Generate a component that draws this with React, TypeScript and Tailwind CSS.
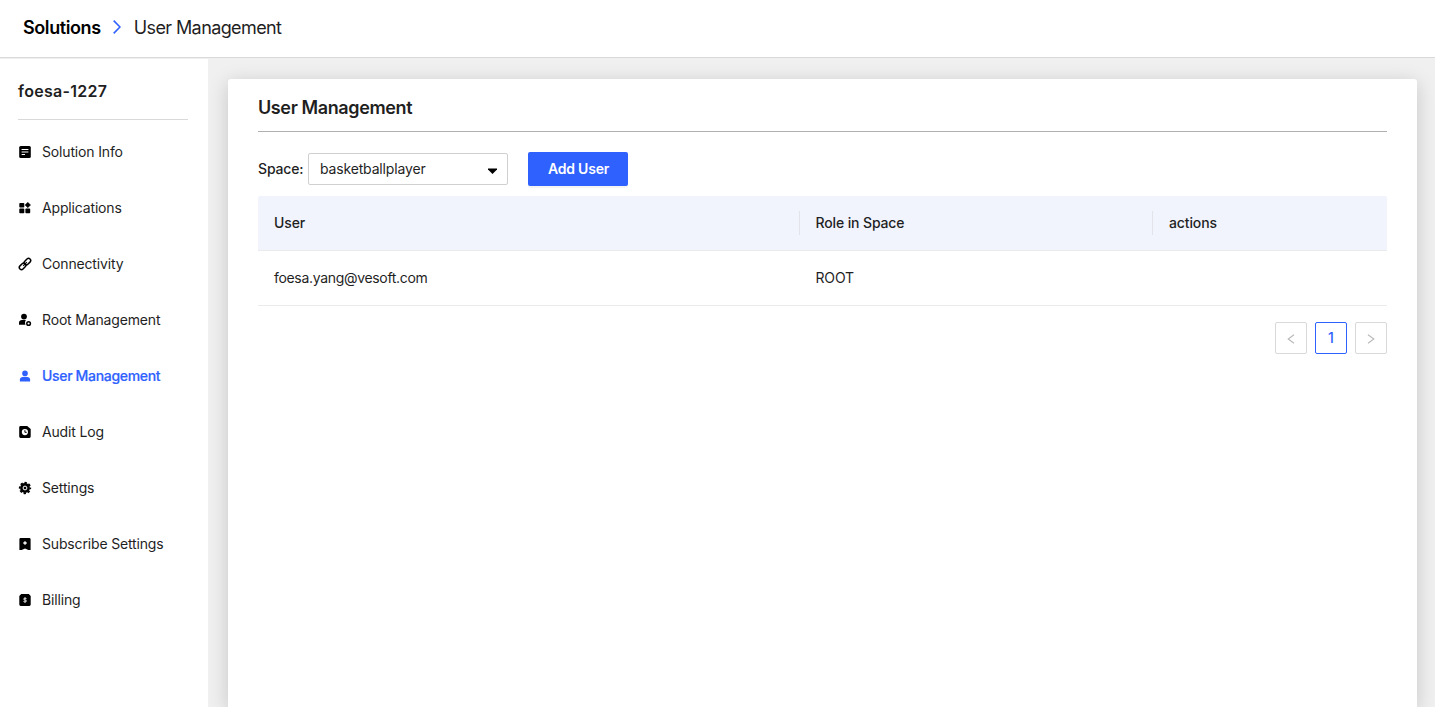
import React from "react";

type IconProps = { children: React.ReactNode };

const Glyph = ({ children }: IconProps) => (
  <svg width="14" height="14" viewBox="0 0 14 14" fill="currentColor" className="shrink-0">
    {children}
  </svg>
);

const InfoIcon = () => (
  <Glyph>
    <rect x="1.2" y="1" width="11.6" height="12" rx="1.5" />
    <path d="M3.6 4.5h6.8M3.6 7h6.8M3.6 9.500h3.400" stroke="#fff" strokeWidth="1.100" fill="none" />
  </Glyph>
);

const AppsIcon = () => (
  <Glyph>
    <rect x="1.3" y="1.9" width="5" height="4.7" rx="0.8" />
    <rect x="1.3" y="7.6" width="5" height="4.7" rx="0.8" />
    <rect x="7.4" y="7.6" width="4.8" height="4.7" rx="0.8" />
    <path d="M9.8 1.2l2.8 2.8-2.8 2.8L7 4z" stroke="currentColor" strokeWidth="0.4" strokeLinejoin="round" />
  </Glyph>
);

const LinkIcon = () => (
  <Glyph>
    <g fill="none" stroke="currentColor" strokeWidth="1.5">
      <rect x="5.7" y="2.55" width="7.4" height="4.3" rx="2.15" transform="rotate(-45 9.4 4.7)" />
      <rect x="0.9" y="7.15" width="7.4" height="4.3" rx="2.15" transform="rotate(-45 4.6 9.3)" />
      <path d="M5.2 8.8l3.6-3.6" strokeWidth="1.2" />
    </g>
  </Glyph>
);

const RootIcon = () => (
  <Glyph>
    <circle cx="6" cy="3.6" r="2.9" />
    <path d="M1 11.8V9.8C1 8 2.3 7.100 4 7.100h3.900C6.900 8.400 6.800 10.200 7.500 11.800z" />
    <circle cx="10.600" cy="10.500" r="1.800" fill="none" stroke="currentColor" strokeWidth="1.500" />
  </Glyph>
);

const UserIcon = () => (
  <Glyph>
    <circle cx="7" cy="4.400" r="2.800" />
    <path d="M1.900 12.400v-1.800C1.900 8.800 3.200 7.900 4.700 7.900h4.600c1.500 0 2.800.9 2.800 2.700v1.800z" />
  </Glyph>
);

const AuditIcon = () => (
  <Glyph>
    <path d="M2.600 1h6.600l3.500 3v7.600a1.400 1.400 0 0 1-1.400 1.400H2.600a1.400 1.400 0 0 1-1.400-1.400V2.400A1.400 1.400 0 0 1 2.600 1z" />
    <circle cx="6.900" cy="7.100" r="3.100" fill="#fff" />
    <path d="M6.900 5.200v2.100h1.800" fill="none" stroke="currentColor" strokeWidth="1" />
  </Glyph>
);

const SettingsIcon = () => (
  <Glyph>
    <circle cx="7" cy="7" r="4.900" />
    <circle cx="7" cy="7" r="5.300" fill="none" stroke="currentColor" strokeWidth="1.700" strokeDasharray="2.400 1.763" strokeDashoffset="1.200" />
    <circle cx="7" cy="7" r="1.900" fill="none" stroke="#fff" strokeWidth="1" />
  </Glyph>
);

const SubscribeIcon = () => (
  <Glyph>
    <path d="M2.700 1h8.600a1.300 1.300 0 0 1 1.300 1.300V13H10.300L7 11.400 3.700 13H1.400V2.300A1.300 1.300 0 0 1 2.700 1z" />
    <path d="M7 4.300v3.400M5.300 6h3.400" stroke="#fff" strokeWidth="1.300" />
  </Glyph>
);

const BillingIcon = () => (
  <Glyph>
    <path d="M3.200 1h7.600l1.900 1.900v8.700a1.400 1.400 0 0 1-1.400 1.400H2.700a1.400 1.400 0 0 1-1.400-1.400V2.900z" />
    <path d="M8.600 5.700C8.200 5.100 5.500 4.900 5.500 6.100c0 1.200 3.100.6 3.100 1.900 0 1.200-2.800 1.100-3.200.4M7 4.200v5.600" fill="none" stroke="#fff" strokeWidth="0.800" />
  </Glyph>
);

const menu = [
  { label: "Solution Info", Icon: InfoIcon },
  { label: "Applications", Icon: AppsIcon },
  { label: "Connectivity", Icon: LinkIcon },
  { label: "Root Management", Icon: RootIcon },
  { label: "User Management", Icon: UserIcon, active: true },
  { label: "Audit Log", Icon: AuditIcon },
  { label: "Settings", Icon: SettingsIcon },
  { label: "Subscribe Settings", Icon: SubscribeIcon },
  { label: "Billing", Icon: BillingIcon },
];

const Header = () => (
  <header className="flex h-[58px] shrink-0 items-center border-b border-[#d9d9d9] bg-white pb-0.5 pl-[23px] text-[18px] leading-7">
    <span className="font-semibold tracking-[-0.400px] text-black">Solutions</span>
    <svg width="8" height="14" viewBox="0 0 8 14" className="mr-[13px] mb-[2px] ml-3" fill="none" stroke="#2f61ff" strokeWidth="1.600">
      <path d="M0.700 0.600L7 7l-6.300 6.400" />
    </svg>
    <span className="tracking-[-0.600px]">User Management</span>
  </header>
);

const Sidebar = () => (
  <aside className="mt-px w-[208px] shrink-0 bg-white">
    <h2 className="mx-[18px] mr-5 h-[61px] border-b border-[#d9d9d9] pt-[20px] text-[16px] leading-6 font-semibold tracking-[0.300px]">
      foesa-1227
    </h2>
    <nav className="mt-1 flex flex-col text-[14px]">
      {menu.map(({ label, Icon, active }) => (
        <a
          key={label}
          className={
            active
              ? "flex h-14 items-center gap-[10px] pl-[18px] font-medium tracking-[-0.330px] text-[#2f61ff]"
              : "flex h-14 items-center gap-[10px] pl-[18px] tracking-[-0.160px] text-black"
          }
        >
          <Icon />
          <span className={active ? "mb-0.5 [-webkit-text-stroke:0.200px_#2f61ff]" : "mb-0.5 text-[#1f1f1f]"}>{label}</span>
        </a>
      ))}
    </nav>
  </aside>
);

const PageArrow = ({ d }: { d: string }) => (
  <button className="flex size-8 items-center justify-center rounded-[2px] border border-[#d9d9d9]">
    <svg width="8" height="10" viewBox="0 0 8 10" fill="none" stroke="#b8b8b8" strokeWidth="1.100" className="mt-0.5">
      <path d={d} />
    </svg>
  </button>
);

export default function App() {
  return (
    <div className="flex h-screen flex-col overflow-hidden bg-[#f0f0f0] font-['Inter','Liberation_Sans',sans-serif] text-[14px] text-[#1f1f1f]">
      <Header />
      <div className="flex min-h-0 flex-1">
        <Sidebar />
        <main className="mt-[21px] mr-[18px] ml-5 min-w-0 flex-1 rounded-t-[3px] bg-white px-[30px] shadow-[0_4px_20px_rgba(0,0,0,0.180)]">
          <h1 className="h-[53px] border-b border-[#b0b0b0] pt-[15px] text-[18px] leading-7 font-semibold tracking-[-0.380px]">
            User Management
          </h1>
          <div className="mt-5 flex h-[34px] items-center">
            <span className="mb-0.5 w-[50px] font-medium tracking-[-0.150px]">Space:</span>
            <div className="flex h-8 w-[200px] items-center justify-between rounded-[2px] border border-[#d0d0d0] pr-[10px] pl-[11px]">
              <span className="mb-0.5 tracking-[-0.160px]">basketballplayer</span>
              <svg width="9" height="6" viewBox="0 0 9 6" className="mt-1">
                <path d="M0 0.500h9v1L4.500 6 0 1.500z" fill="#000" />
              </svg>
            </div>
            <button className="ml-5 h-[34px] w-[100px] rounded-[2px] bg-[#2f61ff] pb-0.5 pl-px font-semibold tracking-[-0.200px] text-white shadow-[0_2px_0_rgba(0,0,0,0.045)]">
              Add User
            </button>
          </div>
          <div className="mt-[10px]">
            <div className="flex h-[55px] items-center rounded-t-[2px] border-b border-[#ebebeb] bg-[#f1f4fd] font-medium tracking-[-0.130px]">
              <div className="w-[541px] pb-0.5 pl-4">User</div>
              <div className="flex h-6 w-[353px] items-center border-l border-[#e2e4ea] pb-0.5 pl-[15.500px]">Role in Space</div>
              <div className="flex h-6 flex-1 items-center border-l border-[#e2e4ea] pb-0.5 pl-4">actions</div>
            </div>
            <div className="flex h-[55px] items-center border-b border-[#ebebeb] pb-0.5">
              <div className="w-[541px] pl-4 tracking-[-0.320px]">foesa.yang@vesoft.com</div>
              <div className="w-[353px] pl-[16.500px] tracking-[-0.150px]">ROOT</div>
              <div className="flex-1 pl-[17px]" />
            </div>
          </div>
          <div className="mt-4 flex justify-end gap-2">
            <PageArrow d="M7 0.800L1.200 5 7 9.200" />
            <button className="size-8 rounded-[2px] border border-[#2f61ff] pb-px font-medium text-[#2f61ff]">1</button>
            <PageArrow d="M1 0.800L6.800 5 1 9.200" />
          </div>
        </main>
      </div>
    </div>
  );
}
